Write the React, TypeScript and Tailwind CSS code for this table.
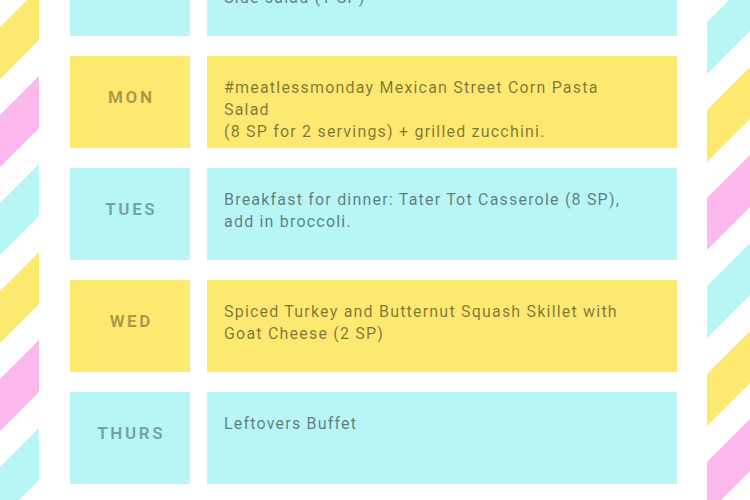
import React from "react";

type Day = {
  label: string;
  tone: "yellow" | "cyan";
  lines: string[];
};

const days: Day[] = [
  { label: "SUN", tone: "cyan", lines: ["Slow Cooker Chicken Chili (4 SP)", "Side salad (1 SP)"] },
  {
    label: "MON",
    tone: "yellow",
    lines: [
      "#meatlessmonday Mexican Street Corn Pasta",
      "Salad",
      "(8 SP for 2 servings) + grilled zucchini.",
    ],
  },
  {
    label: "TUES",
    tone: "cyan",
    lines: ["Breakfast for dinner: Tater Tot Casserole (8 SP),", "add in broccoli."],
  },
  {
    label: "WED",
    tone: "yellow",
    lines: ["Spiced Turkey and Butternut Squash Skillet with", "Goat Cheese (2 SP)"],
  },
  { label: "THURS", tone: "cyan", lines: ["Leftovers Buffet"] },
];

const YELLOW = "#fee970";
const CYAN = "#b8f6f6";
const PINK = "#fdb9ee";

const LeftStripes: React.FC = () => {
  const bands = [
    { t: -12, c: YELLOW },
    { t: 76, c: PINK },
    { t: 164, c: CYAN },
    { t: 252, c: YELLOW },
    { t: 340, c: PINK },
    { t: 428, c: CYAN },
  ];
  return (
    <svg width="39" height="500" viewBox="0 0 39 500" className="shrink-0">
      {bands.map((b) => (
        <polygon
          key={b.t}
          points={`39,${b.t} 39,${b.t + 52} 0,${b.t + 91} 0,${b.t + 39}`}
          fill={b.c}
        />
      ))}
    </svg>
  );
};

const RightStripes: React.FC = () => {
  const bands = [
    { t: 22, c: CYAN },
    { t: 110, c: YELLOW },
    { t: 198, c: PINK },
    { t: 286, c: CYAN },
    { t: 374, c: YELLOW },
    { t: 462, c: PINK },
  ];
  return (
    <svg width="43" height="500" viewBox="0 0 43 500" className="shrink-0">
      {bands.map((b) => (
        <polygon
          key={b.t}
          points={`0,${b.t} 43,${b.t - 43} 43,${b.t + 9} 0,${b.t + 52}`}
          fill={b.c}
        />
      ))}
    </svg>
  );
};

const DayRow: React.FC<{ day: Day }> = ({ day }) => {
  const bg = day.tone === "yellow" ? "bg-[#fee970]" : "bg-[#b8f6f6]";
  return (
    <div className="flex gap-[17px] h-[92px]">
      {/* day label */}
      <div className={`${bg} w-[120px] flex items-center justify-center pb-[9px]`}>
        <span className="text-[17px] font-bold tracking-[2.6px] text-black/35 pl-[2.6px]">
          {day.label}
        </span>
      </div>

      {/* meal text */}
      <div className={`${bg} w-[470px] pl-[17px] pt-[21px] text-[16px] leading-[22px] tracking-[1.2px] text-black/50`}>
        {day.lines.map((l) => (
          <div key={l} className="whitespace-nowrap">
            {l}
          </div>
        ))}
      </div>
    </div>
  );
};

export default function App() {
  return (
    <div
      className="w-[750px] h-[500px] overflow-hidden bg-white flex"
      style={{ fontFamily: "Roboto, 'Noto Sans', sans-serif" }}
    >
      <LeftStripes />

      <div className="ml-[31px] -mt-[56px] flex flex-col gap-[20px]">
        {days.map((d) => (
          <DayRow key={d.label} day={d} />
        ))}
      </div>

      <div className="ml-[30px]">
        <RightStripes />
      </div>
    </div>
  );
}
